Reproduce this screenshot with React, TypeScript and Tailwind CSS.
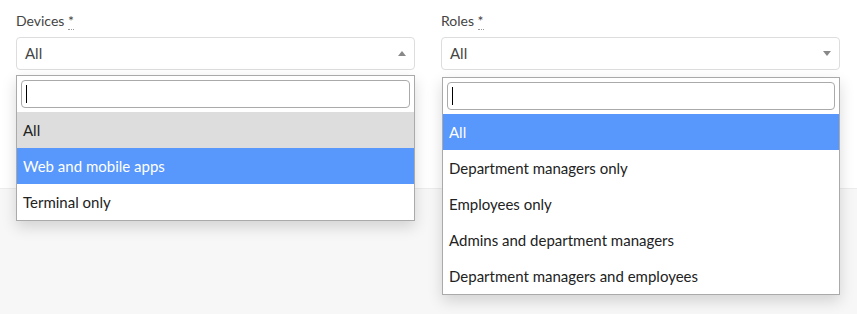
import React from "react"

const font = { fontFamily: "Lato, 'Liberation Sans', sans-serif" }

function Caret({ up }: { up?: boolean }) {
  return (
    <svg width="8" height="5" viewBox="0 0 8 5" className="fill-[#888]">
      {up ? <path d="M0 5 L4 0 L8 5 Z" /> : <path d="M0 0 L8 0 L4 5 Z" />}
    </svg>
  )
}

function Field({
  label,
  up,
  options,
  selected,
  active,
  top,
}: {
  label: string
  up?: boolean
  options: string[]
  selected: number
  active: number
  top: string
}) {
  return (
    <div className="relative">
      <label className="block h-[37px] pt-[12px] text-[14px] leading-[18px] text-[#444]">
        {label}{" "}
        <abbr className="no-underline border-b border-dotted border-[#999] text-[#444]" title="required">
          *
        </abbr>
      </label>
      <div className="flex h-[33px] items-center justify-between rounded-[4px] border border-[#ddd] bg-white pl-[8px] pr-[8px] text-[15px] text-[#444]">
        <span>All</span>
        <Caret up={up} />
      </div>
      <div
        className={`absolute left-0 right-0 z-10 border border-[#aaa] bg-white shadow-[0_6px_14px_rgba(0,0,0,0.15)] ${top}`}
      >
        <div className="p-[4px]">
          <div className="flex h-[28px] items-center rounded-[4px] border border-[#aaa] bg-white pl-[4px]">
            <span className="h-[18px] w-px bg-black" />
          </div>
        </div>
        <ul>
          {options.map((o, i) => (
            <li
              key={o}
              className={`flex h-[36px] items-center px-[6px] text-[15px] ${
                i === active
                  ? "bg-[#5897fb] text-white"
                  : i === selected
                  ? "bg-[#ddd] text-[#222]"
                  : "bg-white text-[#222]"
              }`}
            >
              {o}
            </li>
          ))}
        </ul>
      </div>
    </div>
  )
}

export default function App() {
  return (
    <div className="h-[314px] w-[857px] bg-[#f7f7f7]" style={font}>
      <div className="h-[189px] border-b border-[#ececec] bg-white">
        <div className="grid grid-cols-2 gap-[26px] pl-4 pr-[17px]">
          <Field
            label="Devices"
            up
            options={["All", "Web and mobile apps", "Terminal only"]}
            selected={0}
            active={1}
            top="top-[75px]"
          />
          <Field
            label="Roles"
            options={[
              "All",
              "Department managers only",
              "Employees only",
              "Admins and department managers",
              "Department managers and employees",
            ]}
            selected={0}
            active={0}
            top="top-[77px] left-[1px]"
          />
        </div>
      </div>
    </div>
  )
}
